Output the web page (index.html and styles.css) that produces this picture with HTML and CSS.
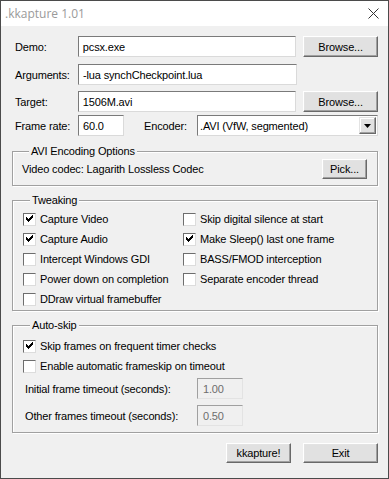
FILE: index.html
```html
<!DOCTYPE html>
<html>
<head>
<meta charset="utf-8">
<title>.kkapture 1.01</title>
<link rel="stylesheet" href="styles.css">
</head>
<body>
<div class="window">
  <div class="titlebar">
    <span class="title">.kkapture 1.01</span>
    <svg class="close" width="11" height="11" viewBox="0 0 11 11"><path d="M0.5 0.5 L10.5 10.5 M10.5 0.5 L0.5 10.5" stroke="#333" stroke-width="1" fill="none"/></svg>
  </div>
  <div class="content">
    <div class="row r1">
      <span class="label">Demo:</span>
      <span class="edit wide">pcsx.exe</span>
      <span class="btn browse">Browse...</span>
    </div>
    <div class="row r2">
      <span class="label">Arguments:</span>
      <span class="edit wide">-lua synchCheckpoint.lua</span>
    </div>
    <div class="row r3">
      <span class="label">Target:</span>
      <span class="edit wide">1506M.avi</span>
      <span class="btn browse">Browse...</span>
    </div>
    <div class="row r4">
      <span class="label">Frame rate:</span>
      <span class="edit rate">60.0</span>
      <span class="label enc">Encoder:</span>
      <span class="combo"><span class="combo-text">.AVI (VfW, segmented)</span><span class="drop"><svg width="7" height="4" viewBox="0 0 7 4"><path d="M0 0 H7 L3.5 4 Z" fill="#000"/></svg></span></span>
    </div>

    <fieldset class="group g1">
      <legend>AVI Encoding Options</legend>
      <div class="codec-row">
        <span>Video codec: Lagarith Lossless Codec</span>
        <span class="btn pick">Pick...</span>
      </div>
    </fieldset>

    <fieldset class="group g2">
      <legend>Tweaking</legend>
      <div class="checks">
        <label class="chk"><span class="box on"></span>Capture Video</label>
        <label class="chk"><span class="box"></span>Skip digital silence at start</label>
        <label class="chk"><span class="box on"></span>Capture Audio</label>
        <label class="chk"><span class="box on"></span>Make Sleep() last one frame</label>
        <label class="chk"><span class="box"></span>Intercept Windows GDI</label>
        <label class="chk"><span class="box"></span>BASS/FMOD interception</label>
        <label class="chk"><span class="box"></span>Power down on completion</label>
        <label class="chk"><span class="box"></span>Separate encoder thread</label>
        <label class="chk"><span class="box"></span>DDraw virtual framebuffer</label>
      </div>
    </fieldset>

    <fieldset class="group g3">
      <legend>Auto-skip</legend>
      <label class="chk"><span class="box on"></span>Skip frames on frequent timer checks</label>
      <label class="chk"><span class="box"></span>Enable automatic frameskip on timeout</label>
      <div class="trow t1">
        <span class="tlabel">Initial frame timeout (seconds):</span>
        <span class="edit dis">1.00</span>
      </div>
      <div class="trow t2">
        <span class="tlabel">Other frames timeout (seconds):</span>
        <span class="edit dis">0.50</span>
      </div>
    </fieldset>

    <div class="actions">
      <span class="btn go">kkapture!</span>
      <span class="btn exit">Exit</span>
    </div>
  </div>
</div>
</body>
</html>
```
FILE: styles.css
```css
* { box-sizing: border-box; }
html, body { margin: 0; padding: 0; background: #f0f0f0; }
body { font-family: "Liberation Sans", Arial, sans-serif; font-size: 11px; letter-spacing: -0.15px; color: #000; }

.window {
  width: 389px; height: 479px;
  border: 1px solid #4b4b4b;
  background: #f0f0f0;
  display: flex; flex-direction: column;
}
.titlebar {
  height: 25px; background: #fff;
  display: flex; align-items: center; justify-content: space-between;
  padding: 0 9px 0 4px;
}
.title { font-family: "Open Sans", "Noto Sans", sans-serif; font-size: 12px; letter-spacing: 0; color: #9a9a9a; }
.close { display: block; }

.content { padding: 10px 10px 0 11px; }

.row { display: flex; align-items: center; height: 21px; padding-left: 3px; }
.r2 { margin-top: 7px; }
.r3 { margin-top: 6px; }
.r4 { margin-top: 3px; }
.label { width: 63px; white-space: nowrap; }
.label.enc { width: 53px; margin-left: 20px; }

.edit {
  display: flex; align-items: center;
  height: 21px; background: #fff;
  border: 1px solid; border-color: #7a7a7a #dadada #dadada #7a7a7a;
  padding-left: 4px; white-space: nowrap; overflow: hidden;
}
.edit.wide { width: 219px; }
.edit.rate { width: 46px; }
.edit.dis { width: 46px; background: #f0f0f0; color: #6d6d6d; border-color: #a0a0a0 #e3e3e3 #e3e3e3 #a0a0a0; padding-left: 5px; }

.btn {
  display: flex; align-items: center; justify-content: center;
  height: 21px; background: #e1e1e1;
  border: 1px solid; border-color: #fff #696969 #696969 #fff;
  box-shadow: inset -1px -1px #a0a0a0, inset 1px 1px #e3e3e3;
  white-space: nowrap;
}
.browse { width: 75px; margin-left: 7px; }

.combo {
  display: flex; align-items: center; justify-content: space-between;
  width: 181px; height: 21px; background: #fff;
  border: 1px solid; border-color: #7a7a7a #dadada #dadada #7a7a7a;
  padding: 0 1px 0 1px;
}
.combo-text { padding-left: 1px; }
.drop {
  width: 17px; height: 17px; background: #e1e1e1;
  border: 1px solid; border-color: #e3e3e3 #696969 #696969 #e3e3e3;
  box-shadow: inset -1px -1px #a0a0a0, inset 1px 1px #fff;
  display: flex; align-items: center; justify-content: center;
}
.drop svg { display: block; }

.group {
  margin: 0; padding: 0;
  border: 1px solid #a0a0a0;
  box-shadow: inset 1px 1px #fff, 1px 1px #fff;
  min-width: 0;
}
.group legend { margin-left: 7px; padding: 0 2px; line-height: 13px; background: #f0f0f0; }
.g1 { margin-top: 9px; padding: 1px 10px 6px 9px; width: 366px; }
.g2 { margin-top: 8px; padding: 2px 0 1px 10px; width: 366px; }
.g3 { margin-top: 8px; padding: 4px 0 6px 10px; width: 366px; }

.codec-row { display: flex; align-items: center; justify-content: space-between; height: 20px; }
.pick { width: 45px; height: 20px; }

.checks { display: grid; grid-template-columns: 160px 1fr; }
.chk { display: flex; align-items: center; height: 20px; white-space: nowrap; }
.box {
  width: 13px; height: 13px; margin-right: 4px; background: #fff;
  border: 1px solid; border-color: #6d6d6d #dcdcdc #dcdcdc #6d6d6d;
  position: relative;
}
.box.on::after {
  content: ""; position: absolute; left: 2px; top: 1px;
  width: 7px; height: 7px;
  background: no-repeat center / 7px 7px;
  background-image: url("data:image/svg+xml;utf8,<svg xmlns='http://www.w3.org/2000/svg' width='7' height='7' viewBox='0 0 7 7' shape-rendering='crispEdges'><path fill='black' d='M6 0h1v3h-1v1h-1v1h-1v1h-1v1h-1v-1h-1v-1h-1v-3h1v1h1v1h1v-1h1v-1h1v-1h1z'/></svg>");
}

.trow { display: flex; align-items: center; height: 21px; padding-left: 2px; }
.t1 { margin-top: 2px; }
.t2 { margin-top: 6px; }
.tlabel { width: 172px; white-space: nowrap; }

.actions { display: flex; justify-content: flex-end; gap: 12px; margin-top: 10px; padding-right: 0; }
.go { width: 65px; height: 20px; }
.exit { width: 75px; height: 20px; }
```
